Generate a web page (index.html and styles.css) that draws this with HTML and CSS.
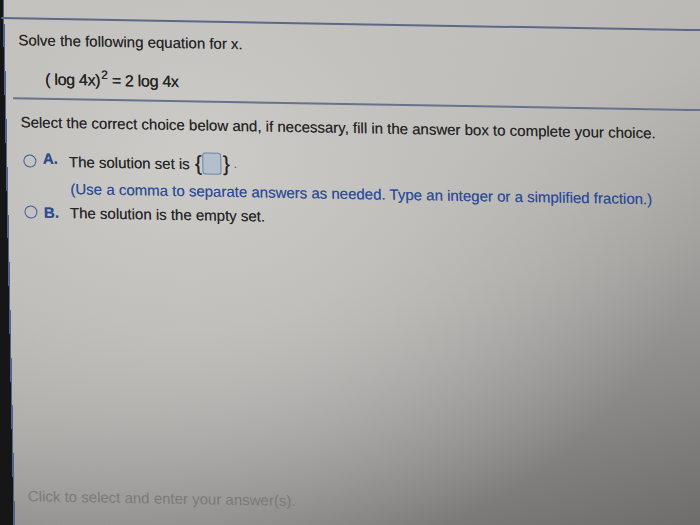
FILE: index.html
```html
<!DOCTYPE html>
<html>
<head>
<meta charset="utf-8">
<link rel="stylesheet" href="styles.css">
</head>
<body>
<div class="screen">
  <div class="topbar"></div>
  <p class="prompt">Solve the following equation for x.</p>
  <p class="equation">( log 4x)<sup>2</sup> = 2 log 4x</p>
  <div class="divider"></div>
  <p class="instr">Select the correct choice below and, if necessary, fill in the answer box to complete your choice.</p>
  <div class="choice choice-a">
    <span class="radio"></span>
    <span class="label">A.</span>
    <span class="text">The solution set is<span class="brace open">{</span><span class="ansbox"></span><span class="brace">}</span><span class="dot">.</span></span>
  </div>
  <p class="hint">(Use a comma to separate answers as needed. Type an integer or a simplified fraction.)</p>
  <div class="choice choice-b">
    <span class="radio"></span>
    <span class="label">B.</span>
    <span class="text">The solution is the empty set.</span>
  </div>
  <p class="footer">Click to select and enter your answer(s).</p>
</div>
</body>
</html>
```

FILE: styles.css
```css
html, body {
  margin: 0;
  padding: 0;
  width: 700px;
  height: 525px;
  overflow: hidden;
}

body {
  background:
    linear-gradient(#5c6885, #5c6885) 684px 29px / 16px 2px no-repeat,
    linear-gradient(#67728c, #67728c) 684px 109px / 16px 2px no-repeat,
    linear-gradient(88.8deg, #161616 0, #161616 13.5px, #4f6390 13.5px, #4f6390 15px, transparent 15px),
    radial-gradient(ellipse 520px 420px at 28% 30%, rgba(205,203,200,1) 0%, rgba(196,194,191,0.9) 40%, rgba(170,168,165,0) 100%),
    linear-gradient(165deg, #c4c2bf 0%, #b9b7b4 35%, #a3a19e 60%, #8a8886 80%, #6f6d6b 100%);
}

.screen {
  width: 684px;
  height: 510px;
  margin-left: 4.5px;
  transform-origin: -4.5px 0;
  transform: skew(1.2deg, 1deg);
  font-family: "Liberation Sans", Arial, sans-serif;
  color: #242424;
}

.topbar {
  height: 17px;
  border-bottom: 2px solid #5c6885;
  margin-left: -4.5px;
}

p { margin: 0; }

.prompt {
  margin-top: 12px;
  padding-left: 12.5px;
  font-size: 15px;
  line-height: 18px;
  text-shadow: 0 0 0.5px rgba(36,36,36,0.6);
}

.equation {
  margin-top: 21px;
  padding-left: 38.5px;
  font-size: 16px;
  line-height: 18px;
  letter-spacing: -0.3px;
  text-shadow: 0 0 0.6px #242424;
}
.equation sup {
  font-size: 12px;
  line-height: 0;
  vertical-align: 7px;
  margin-left: 1px;
}

.divider {
  margin-top: 9px;
  margin-left: 5.5px;
  border-top: 2px solid #67728c;
}

.instr {
  margin-top: 14px;
  padding-left: 13px;
  font-size: 15px;
  line-height: 18px;
  text-shadow: 0 0 0.5px rgba(36,36,36,0.6);
}

.choice {
  display: flex;
  align-items: center;
  padding-left: 14.5px;
  font-size: 15px;
  text-shadow: 0 0 0.5px rgba(36,36,36,0.6);
}
.choice-a { margin-top: 17px; height: 24px; }
.choice-b { margin-top: 5px; height: 18px; }

.radio {
  width: 11px;
  height: 11px;
  border: 1.5px solid #3c5996;
  border-radius: 50%;
  margin-right: 7px;
  flex: none;
}
.label {
  width: 26px;
  flex: none;
  color: #2a4d93;
  font-weight: bold;
}
.choice-a .label { margin-top: -6px; }
.text {
  display: flex;
  align-items: center;
  white-space: nowrap;
}
.brace {
  font-size: 21px;
  line-height: 20px;
  margin: 0 1px;
}
.brace.open { margin-left: 5px; }
.ansbox {
  width: 19px;
  height: 22px;
  box-sizing: border-box;
  border: 1px solid #6d84a6;
  border-radius: 3px;
  background: #b4bfcb;
}
.dot {
  margin-left: 3px;
  color: #5a6a80;
  font-size: 12px;
}

.hint {
  margin-top: 7px;
  padding-left: 61.5px;
  font-size: 15px;
  line-height: 18px;
  color: #2b4a97;
  text-shadow: 0 0 0.5px rgba(43,74,151,0.6);
}

.footer {
  margin-top: 267px;
  padding-left: 12.5px;
  font-size: 15px;
  line-height: 18px;
  color: #7b7979;
}
```
